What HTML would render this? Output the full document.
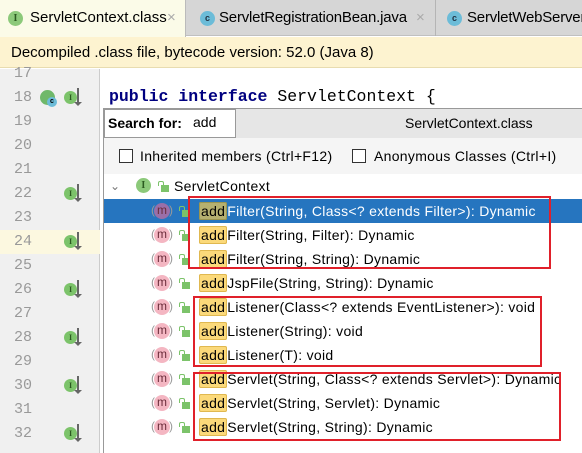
<!DOCTYPE html><html><head><style>
*{margin:0;padding:0;box-sizing:border-box}
body{width:582px;height:453px;overflow:hidden;background:#fff;font-family:"Liberation Sans",sans-serif;position:relative}
.a{position:absolute}
.ln{position:absolute;left:14px;font:15px "Liberation Mono",monospace;color:#999;line-height:20px}
.gi{position:absolute;left:64px;width:13px;height:13px;border-radius:50%;background:#7cc36a;font:bold 8px "Liberation Serif",serif;color:#2b5a20;text-align:center;line-height:13px}
.ar{position:absolute;left:77px;width:2px;height:15px;background:#666}
.ar:after{content:"";position:absolute;left:-3px;bottom:-3px;border-left:4px solid transparent;border-right:4px solid transparent;border-top:4px solid #666}
.row{position:absolute;left:104px;width:478px;height:24px;font-size:14px;line-height:24px;color:#000;white-space:nowrap;letter-spacing:0.3px}
.m{position:absolute;left:50px;top:4px;width:16px;height:16px;border-radius:50%;background:#f4b6c2;font-size:12px;line-height:15px;text-align:center;color:#6b2c3a;letter-spacing:0}
.m:before{content:"(";position:absolute;left:-3px;color:#999}
.m:after{content:")";position:absolute;right:-3px;color:#999}
.lk{position:absolute;left:78px;top:11px;width:8px;height:7px;background:#7cc36a}
.lk:before{content:"";position:absolute;left:-3px;top:-4px;width:4px;height:4px;border:1.5px solid #7cc36a;border-bottom:none;border-radius:2px 2px 0 0}
.t{position:absolute;left:95px}
.h{background:#fbd97a;border:1px solid #e0b850;border-radius:2px;padding:0 1px}
.rb{position:absolute;border:2px solid #e0202a}
</style></head><body>
<div class="a" style="left:0;top:0;width:582px;height:36px;background:#d6d6d6;border-bottom:1px solid #c0c0c0"></div>
<div class="a" style="left:0;top:0;width:186px;height:37px;background:#fbfbe8;border-right:1px solid #bbb"></div>
<div class="a" style="left:8px;top:11px;width:15px;height:15px;border-radius:50%;background:#8cc97a;font:bold 10px 'Liberation Serif',serif;text-align:center;line-height:15px;color:#2b5a20">I</div>
<div class="a" style="left:30px;top:9px;font-size:15px;color:#000">ServletContext.class</div>
<div class="a" style="left:167px;top:9px;font-size:15px;color:#aaa">×</div>
<div class="a" style="left:435px;top:0;width:1px;height:36px;background:#b5b5b5"></div>
<div class="a" style="left:200px;top:11px;width:15px;height:15px;border-radius:50%;background:#6cbcd8;font:bold 9px sans-serif;text-align:center;line-height:15px;color:#234">c</div>
<div class="a" style="left:219px;top:9px;font-size:15px;color:#000;letter-spacing:-0.2px">ServletRegistrationBean.java</div>
<div class="a" style="left:416px;top:9px;font-size:15px;color:#aaa">×</div>
<div class="a" style="left:447px;top:11px;width:15px;height:15px;border-radius:50%;background:#6cbcd8;font:bold 9px sans-serif;text-align:center;line-height:15px;color:#234">c</div>
<div class="a" style="left:467px;top:9px;font-size:15px;color:#000;letter-spacing:-0.2px">ServletWebServer</div>
<div class="a" style="left:0;top:37px;width:582px;height:31px;background:#fdf3d0;border-bottom:1px solid #e8dcb0"></div>
<div class="a" style="left:11px;top:44px;font-size:15px;color:#000">Decompiled .class file, bytecode version: 52.0 (Java 8)</div>
<div class="a" style="left:0;top:69px;width:100px;height:384px;background:#f0f0f0;border-right:1px solid #ccc"></div>
<div class="a" style="left:0;top:230px;width:100px;height:24px;background:#fcf8e0"></div>
<div class="ln" style="top:64px">17</div><div class="ln" style="top:88px">18</div><div class="ln" style="top:112px">19</div><div class="ln" style="top:136px">20</div><div class="ln" style="top:160px">21</div><div class="ln" style="top:184px">22</div><div class="ln" style="top:208px">23</div><div class="ln" style="top:232px">24</div><div class="ln" style="top:256px">25</div><div class="ln" style="top:280px">26</div><div class="ln" style="top:304px">27</div><div class="ln" style="top:328px">28</div><div class="ln" style="top:352px">29</div><div class="ln" style="top:376px">30</div><div class="ln" style="top:400px">31</div><div class="ln" style="top:424px">32</div>
<div class="a" style="left:40px;top:90px;width:15px;height:15px;border-radius:50%;background:#6fb86a"></div>
<div class="a" style="left:47px;top:97px;width:10px;height:10px;border-radius:50%;background:#6cbcd8;font:bold 7px sans-serif;text-align:center;line-height:10px">c</div>
<div class="gi" style="top:91px">I</div><div class="ar" style="top:88px"></div>
<div class="gi" style="top:187px">I</div><div class="ar" style="top:184px"></div>
<div class="gi" style="top:235px">I</div><div class="ar" style="top:232px"></div>
<div class="gi" style="top:283px">I</div><div class="ar" style="top:280px"></div>
<div class="gi" style="top:331px">I</div><div class="ar" style="top:328px"></div>
<div class="gi" style="top:379px">I</div><div class="ar" style="top:376px"></div>
<div class="gi" style="top:427px">I</div><div class="ar" style="top:424px"></div>
<div class="a" style="left:109px;top:87px;font:16.5px 'Liberation Mono',monospace;color:#000;white-space:pre"><b style="color:#000080">public interface</b> ServletContext {</div>
<div class="a" style="left:103px;top:108px;width:479px;height:345px;background:#fff;border-left:1px solid #999;border-top:1px solid #999"></div>
<div class="a" style="left:104px;top:109px;width:478px;height:29px;background:#e6e6e6"></div>
<div class="a" style="left:104px;top:109px;width:132px;height:29px;background:#fff;border:1px solid #999"></div>
<div class="a" style="left:108px;top:115px;font-size:14px;font-weight:bold">Search for:</div>
<div class="a" style="left:193px;top:114px;font-size:14px">add</div>
<div class="a" style="left:405px;top:115px;font-size:14px">ServletContext.class</div>
<div class="a" style="left:104px;top:138px;width:478px;height:36px;background:#f5f5f5"></div>
<div class="a" style="left:119px;top:149px;width:14px;height:14px;border:1px solid #333;background:#fff"></div>
<div class="a" style="left:140px;top:148px;font-size:14px;letter-spacing:0.3px">Inherited members (Ctrl+F12)</div>
<div class="a" style="left:352px;top:149px;width:14px;height:14px;border:1px solid #333;background:#fff"></div>
<div class="a" style="left:374px;top:148px;font-size:14px;letter-spacing:0.3px">Anonymous Classes (Ctrl+I)</div>
<div class="row" style="top:174px"><span class="a" style="left:6px;top:0;color:#777;font-size:12px">&#8964;</span><div class="a" style="left:32px;top:4px;width:15px;height:15px;border-radius:50%;background:#8cc97a;font:bold 10px 'Liberation Serif',serif;text-align:center;line-height:15px;color:#2b5a20">I</div><div class="lk" style="left:57px"></div><span class="t" style="left:70px">ServletContext</span></div>
<div class="row" style="top:199px;background:#2675bf;color:#fff"><div class="m" style="background:#9a6fa8">m</div><div class="lk"></div><span class="t"><span class="h" style="background:#b5b070;border-color:#9a9550;color:#000">add</span>Filter(String, Class&lt;? extends Filter&gt;): Dynamic</span></div>
<div class="row" style="top:223px"><div class="m">m</div><div class="lk"></div><span class="t"><span class="h">add</span>Filter(String, Filter): Dynamic</span></div>
<div class="row" style="top:247px"><div class="m">m</div><div class="lk"></div><span class="t"><span class="h">add</span>Filter(String, String): Dynamic</span></div>
<div class="row" style="top:271px"><div class="m">m</div><div class="lk"></div><span class="t"><span class="h">add</span>JspFile(String, String): Dynamic</span></div>
<div class="row" style="top:295px"><div class="m">m</div><div class="lk"></div><span class="t"><span class="h">add</span>Listener(Class&lt;? extends EventListener&gt;): void</span></div>
<div class="row" style="top:319px"><div class="m">m</div><div class="lk"></div><span class="t"><span class="h">add</span>Listener(String): void</span></div>
<div class="row" style="top:343px"><div class="m">m</div><div class="lk"></div><span class="t"><span class="h">add</span>Listener(T): void</span></div>
<div class="row" style="top:367px"><div class="m">m</div><div class="lk"></div><span class="t"><span class="h">add</span>Servlet(String, Class&lt;? extends Servlet&gt;): Dynamic</span></div>
<div class="row" style="top:391px"><div class="m">m</div><div class="lk"></div><span class="t"><span class="h">add</span>Servlet(String, Servlet): Dynamic</span></div>
<div class="row" style="top:415px"><div class="m">m</div><div class="lk"></div><span class="t"><span class="h">add</span>Servlet(String, String): Dynamic</span></div>
<div class="rb" style="left:188px;top:196px;width:363px;height:73px"></div>
<div class="rb" style="left:193px;top:296px;width:349px;height:71px"></div>
<div class="rb" style="left:193px;top:372px;width:368px;height:69px"></div>
</body></html>
